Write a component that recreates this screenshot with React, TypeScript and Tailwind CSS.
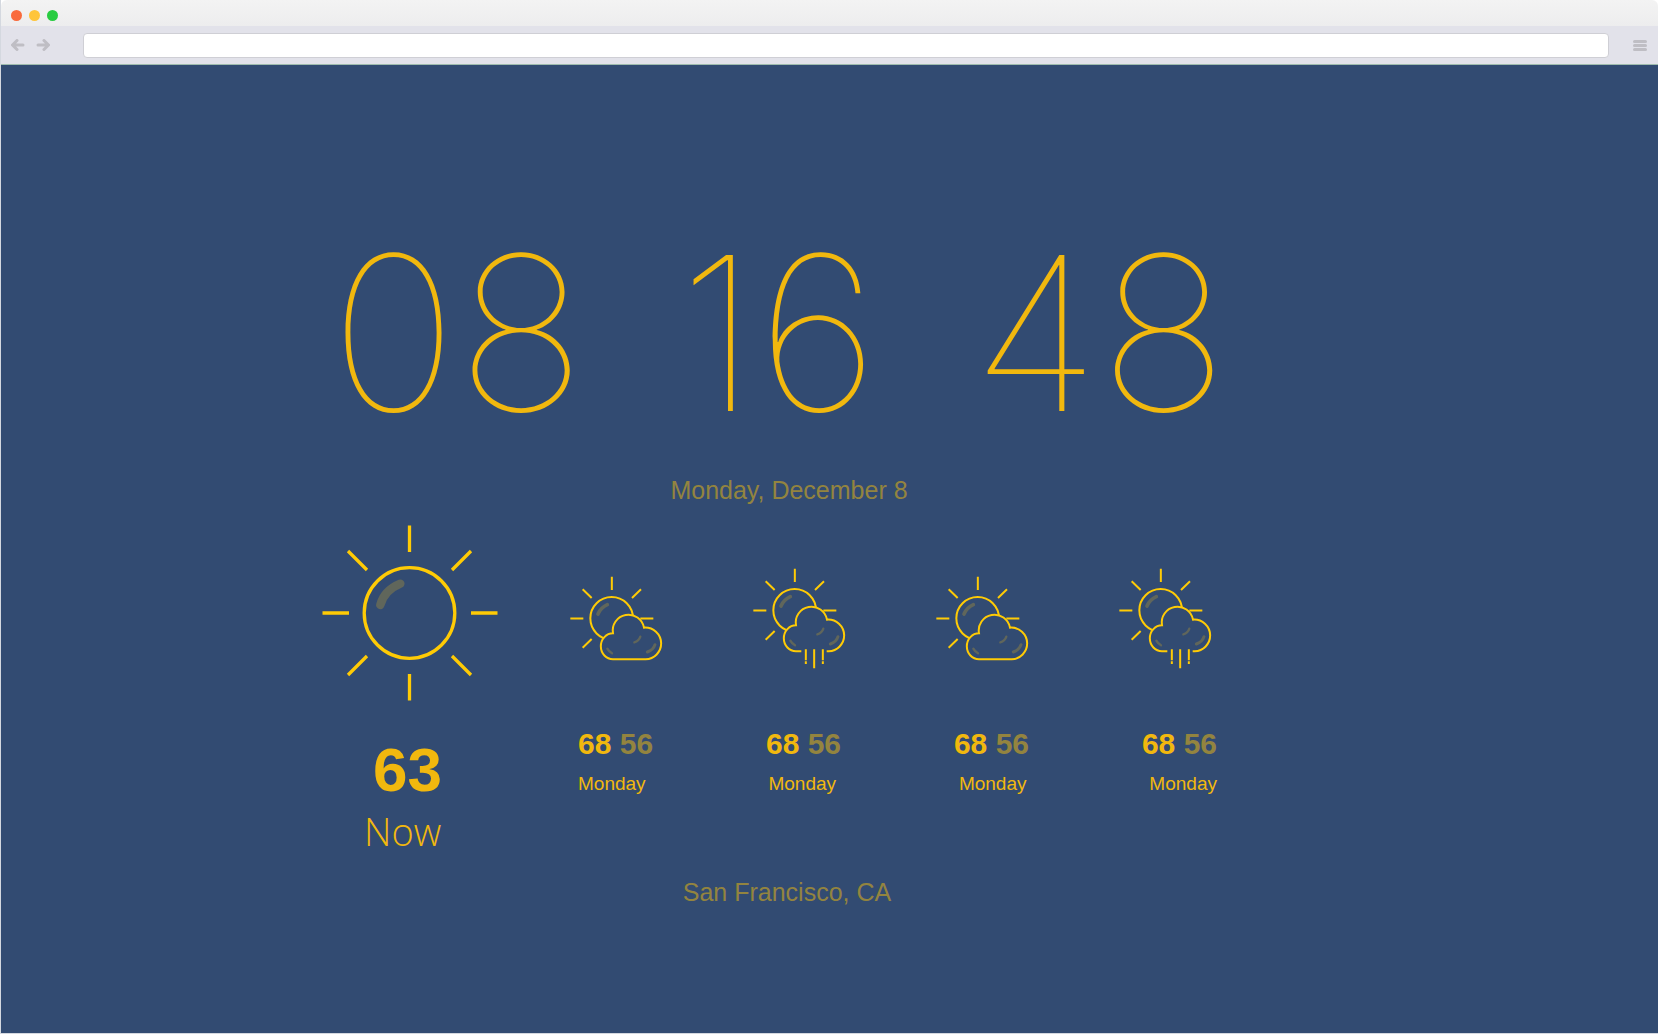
import type { ReactNode } from "react";

type Condition = "cloudy" | "rainy";

const forecast: { id: number; condition: Condition; high: number; low: number; day: string }[] = [
  { id: 1, condition: "cloudy", high: 68, low: 56, day: "Monday" },
  { id: 2, condition: "rainy", high: 68, low: 56, day: "Monday" },
  { id: 3, condition: "cloudy", high: 68, low: 56, day: "Monday" },
  { id: 4, condition: "rainy", high: 68, low: 56, day: "Monday" },
];

function SunIcon() {
  return (
    <svg width="176" height="176" viewBox="0 0 176 176" fill="none" stroke="#ffcb05" strokeWidth="3.3" aria-label="Sunny">
      <circle cx="87.5" cy="88" r="45.3" />
      <path d="M87.5 .5v26.5M87.5 149v26.5M.5 88H27M149 88h26.5M26 26l19 19M149 26l-19 19M26 150l19-19M149 150l-19-19" />
      <path d="M58.3 80C61 70 68 63 78.3 58.7" stroke="#60665b" strokeWidth="8.5" strokeLinecap="round" />
    </svg>
  );
}

function SunBehind() {
  return (
    <>
      <circle cx="154" cy="173" r="64" />
      <path d="M154.5 48v40M30 173.5h39M240 173.5h39M67 86l27 26M242 86l-27 26M67 261l27-26" />
      <path d="M113 160q8-19 28-28" stroke="#60665b" strokeWidth="11" strokeLinecap="round" />
    </>
  );
}

function CloudShine() {
  return (
    <g stroke="#60665b" strokeLinecap="round">
      <path d="M141 264q5 9 14 14" strokeWidth="7" />
      <path d="M222 245q14-4 18-17" strokeWidth="7" />
      <path d="M261 274q18-6 23-22" strokeWidth="9" />
    </g>
  );
}

function WeatherIcon({ condition }: { condition: Condition }) {
  const rainy = condition === "rainy";
  return (
    <svg
      width="93"
      height={rainy ? 101 : 85}
      viewBox={rainy ? "29 46 279 303" : "29 46 279 255"}
      fill="none"
      stroke="#ffcb05"
      strokeWidth="6"
      aria-label={rainy ? "Rain" : "Partly cloudy"}
    >
      <SunBehind />
      {rainy ? (
        <>
          <path
            d="M174 296H158A36.5 39 0 0 1 158 218A46 46 0 0 1 251 201A48 48 0 0 1 302.5 248A48 48 0 0 1 256 296H250"
            fill="#324b72"
          />
          <path d="M187.5 290v33M187.5 326v8M212.5 290v57M238.5 290v33M238.5 326v8" />
        </>
      ) : (
        <path
          d="M158 296A36.5 39 0 0 1 158 218A46 46 0 0 1 251 201A48 48 0 0 1 302.5 248A48 48 0 0 1 256 296Z"
          fill="#324b72"
        />
      )}
      <CloudShine />
    </svg>
  );
}

function NavButton({ label, children }: { label: string; children: ReactNode }) {
  return (
    <button type="button" aria-label={label} className="flex h-6 w-[14px] items-center justify-center">
      {children}
    </button>
  );
}

function BrowserChrome() {
  return (
    <header>
      <div className="flex h-[26px] items-center gap-[7px] rounded-t-md bg-linear-to-b from-[#f3f3f3] to-[#ededee] pt-1 pl-[10px]">
        <button type="button" aria-label="Close" className="size-[11px] rounded-full bg-[#f96a3c]" />
        <button type="button" aria-label="Minimize" className="size-[11px] rounded-full bg-[#ffc53a]" />
        <button type="button" aria-label="Maximize" className="size-[11px] rounded-full bg-[#28cc41]" />
      </div>
      <div className="flex h-[39px] items-center border-b border-[#9fbcae] bg-[#e2e2ea] pr-[11px] pl-[10px]">
        <NavButton label="Back">
          <svg width="14" height="12" viewBox="0 0 14 12" fill="none" stroke="#bfbec4" strokeWidth="3" strokeLinecap="round" strokeLinejoin="round">
            <path d="M12 6H2M6 1.500L1.500 6 6 10.500" />
          </svg>
        </NavButton>
        <div className="w-[11px]" />
        <NavButton label="Forward">
          <svg width="14" height="12" viewBox="0 0 14 12" fill="none" stroke="#bfbec4" strokeWidth="3" strokeLinecap="round" strokeLinejoin="round">
            <path d="M2 6h10M8 1.500L12.500 6 8 10.500" />
          </svg>
        </NavButton>
        <input
          type="text"
          aria-label="Address"
          className="ml-[33px] h-[25px] min-w-0 flex-1 rounded-[4px] border border-[#cfcfd5] bg-white px-2 text-sm outline-none"
        />
        <button type="button" aria-label="Menu" className="ml-6 flex h-6 w-[14px] flex-col justify-center gap-px">
          <span className="h-[3px] w-full rounded-full bg-[#bfbec4]" />
          <span className="h-[3px] w-full rounded-full bg-[#bfbec4]" />
          <span className="h-[3px] w-full rounded-full bg-[#bfbec4]" />
        </button>
      </div>
    </header>
  );
}

export default function App() {
  return (
    <div className="flex min-h-screen flex-col border-b border-l border-[#d4d8df] bg-white font-['Liberation_Sans',sans-serif]">
      <BrowserChrome />
      <main className="grid flex-1 grid-cols-[321fr_930px_406fr] bg-[#324b72] pt-[161px] text-[#f1b80e]">
        <div className="col-start-2">
          <div className="flex gap-[93px] pl-2 font-['Inter',sans-serif] text-[215px] leading-none font-thin">
            <span>08</span>
            <span>16</span>
            <span>48</span>
          </div>
          <p className="mt-[34px] pl-1 text-center text-[25px] leading-[30px] text-[#93843f]">Monday, December 8</p>

          <div className="mt-5 flex">
            <section className="w-[248px]">
              <SunIcon />
              <p className="mt-[39px] pl-[51px] text-[62px] leading-[60px] font-bold">63</p>
              <p className="mt-[11px] pl-[42px] font-['Open_Sans',sans-serif] text-[38px] leading-10 font-light">Now</p>
            </section>
            <section className="mt-[43px] w-[647px]">
              <div className="mr-[5px] flex h-[101px] items-center justify-between">
                {forecast.map((f) => (
                  <WeatherIcon key={f.id} condition={f.condition} />
                ))}
              </div>
              <div className="mt-[59px] flex justify-between pl-2 text-[30px] leading-8 font-bold">
                {forecast.map((f) => (
                  <p key={f.id}>
                    {f.high} <span className="text-[#93843f]">{f.low}</span>
                  </p>
                ))}
              </div>
              <div className="mt-3 flex justify-between pl-2 text-[19px] leading-6">
                {forecast.map((f) => (
                  <p key={f.id}>{f.day}</p>
                ))}
              </div>
            </section>
          </div>

          <p className="mt-[26px] text-center text-[25px] leading-[30px] text-[#93843f]">San Francisco, CA</p>
        </div>
      </main>
    </div>
  );
}
